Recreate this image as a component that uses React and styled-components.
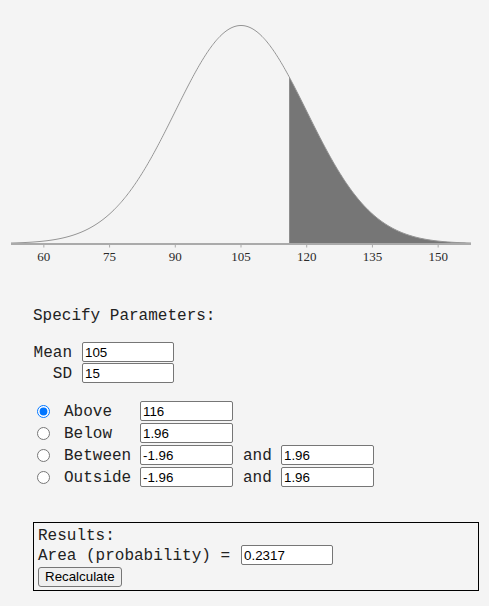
import React from "react";
import styled, { createGlobalStyle } from "styled-components";

const GlobalStyle = createGlobalStyle`
  html, body {
    margin: 0;
    padding: 0;
    background: #f4f4f4;
  }
  body {
    font-family: "Liberation Mono", "Courier New", monospace;
    font-size: 16px;
    color: #222;
  }
`;

const MEAN = 105;
const SD = 15;
const X0 = 11;
const X1 = 471;
const BASE = 243.5;
const PEAK = 218;
const VMIN = MEAN - 3.5 * SD;
const VMAX = MEAN + 3.5 * SD;
const toX = (v) => X0 + ((v - VMIN) / (VMAX - VMIN)) * (X1 - X0);
const toV = (x) => VMIN + ((x - X0) / (X1 - X0)) * (VMAX - VMIN);
const yAt = (v) => {
  const z = (v - MEAN) / SD;
  return BASE - PEAK * Math.exp(-0.5 * z * z);
};

function buildCurve() {
  const pts = [];
  for (let x = X0; x <= X1; x += 1) {
    pts.push(`${x},${yAt(toV(x)).toFixed(2)}`);
  }
  return "M" + pts.join(" L");
}

function buildShade(from) {
  const xs = toX(from);
  const pts = [`${xs.toFixed(2)},${BASE + 0.5}`, `${xs.toFixed(2)},${yAt(from).toFixed(2)}`];
  for (let x = Math.ceil(xs); x <= X1; x += 1) {
    pts.push(`${x},${yAt(toV(x)).toFixed(2)}`);
  }
  pts.push(`${X1},${BASE + 0.5}`);
  return "M" + pts.join(" L") + " Z";
}

const TICKS = [60, 75, 90, 105, 120, 135, 150];

const ChartSvg = styled.svg`
  display: block;
  width: 489px;
  height: 270px;
`;

const TickLabel = styled.text`
  font-family: "Liberation Serif", "Times New Roman", serif;
  font-size: 13px;
  fill: #2a2a2a;
`;

function Chart() {
  return (
    <ChartSvg viewBox="0 0 489 270">
      <path d={buildShade(116)} fill="#767676" />
      <path d={buildCurve()} fill="none" stroke="#959595" strokeWidth="1" />
      <line x1={X0} y1="244" x2={X1} y2="244" stroke="#aaaaaa" strokeWidth="2" />
      {TICKS.map((t) => (
        <g key={t}>
          <line x1={toX(t)} y1="244" x2={toX(t)} y2="247.5" stroke="#aaaaaa" strokeWidth="1" />
          <TickLabel x={toX(t)} y="261" textAnchor="middle">
            {t}
          </TickLabel>
        </g>
      ))}
    </ChartSvg>
  );
}

const Form = styled.div`
  padding-left: 33px;
`;

const Heading = styled.div`
  margin-top: 37px;
  line-height: 18px;
  height: 18px;
`;

const ParamGrid = styled.div`
  margin-top: 17px;
  display: grid;
  grid-template-columns: 39px 92px;
  column-gap: 10px;
  row-gap: 1px;
  align-items: center;
`;

const Label = styled.span`
  line-height: 18px;
  text-align: ${(p) => (p.$align === "right" ? "right" : "left")};
  white-space: pre;
  padding-top: ${(p) => p.$shift || 0}px;
`;

const TextBox = styled.input`
  box-sizing: border-box;
  width: ${(p) => p.$w || 92}px;
  height: 20px;
  margin: 0;
  padding: 1px 2px;
  border: 1px solid #767676;
  border-radius: 2px;
  background: #fff;
  color: #000;
  font-family: "Liberation Sans", Arial, sans-serif;
  font-size: 13.33px;
  outline: none;
`;

const RegionGrid = styled.div`
  margin-top: 18px;
  display: grid;
  grid-template-columns: 31px 76px 93px 48px 93px;
  row-gap: 2px;
  align-items: center;
`;

const RadioCell = styled.label`
  display: flex;
  align-items: center;
  height: 20px;
  padding-left: 4px;
`;

const Radio = styled.input`
  width: 13px;
  height: 13px;
  margin: 0;
`;

const AndText = styled.span`
  line-height: 18px;
  padding-left: 10px;
  padding-top: 2px;
`;

const ResultBox = styled.div`
  margin-top: 35px;
  width: 446px;
  box-sizing: border-box;
  border: 1px solid #000;
  padding: 3px 4px 3px 4px;
`;

const ResultLine = styled.div`
  line-height: 18px;
  height: 18px;
  padding-top: 1px;
`;

const AreaRow = styled.div`
  display: flex;
  align-items: center;
  gap: 11px;
  height: 20px;
`;

const Button = styled.button`
  margin-top: 2px;
  display: block;
  height: 20px;
  box-sizing: border-box;
  padding: 0 6px;
  border: 1px solid #767676;
  border-radius: 3px;
  background: #efefef;
  color: #000;
  font-family: "Liberation Sans", Arial, sans-serif;
  font-size: 13.33px;
  line-height: 16px;
`;

const REGIONS = [
  { key: "above", label: "Above", a: "116", b: null, checked: true },
  { key: "below", label: "Below", a: "1.96", b: null },
  { key: "between", label: "Between", a: "-1.96", b: "1.96" },
  { key: "outside", label: "Outside", a: "-1.96", b: "1.96" },
];

export default function App() {
  return (
    <>
      <GlobalStyle />
      <Chart />
      <Form>
        <Heading>Specify Parameters:</Heading>
        <ParamGrid>
          <Label $align="right" $shift={1}>Mean</Label>
          <TextBox defaultValue="105" />
          <Label $align="right" $shift={1}>SD</Label>
          <TextBox defaultValue="15" />
        </ParamGrid>
        <RegionGrid>
          {REGIONS.map((r) => (
            <React.Fragment key={r.key}>
              <RadioCell>
                <Radio type="radio" name="region" defaultChecked={!!r.checked} />
              </RadioCell>
              <Label $shift={2}>{r.label}</Label>
              <TextBox $w={93} defaultValue={r.a} />
              {r.b !== null ? <AndText>and</AndText> : <span />}
              {r.b !== null ? <TextBox $w={93} defaultValue={r.b} /> : <span />}
            </React.Fragment>
          ))}
        </RegionGrid>
        <ResultBox>
          <ResultLine>Results:</ResultLine>
          <AreaRow>
            <Label $shift={2}>Area (probability) =</Label>
            <TextBox defaultValue="0.2317" />
          </AreaRow>
          <Button>Recalculate</Button>
        </ResultBox>
      </Form>
    </>
  );
}
